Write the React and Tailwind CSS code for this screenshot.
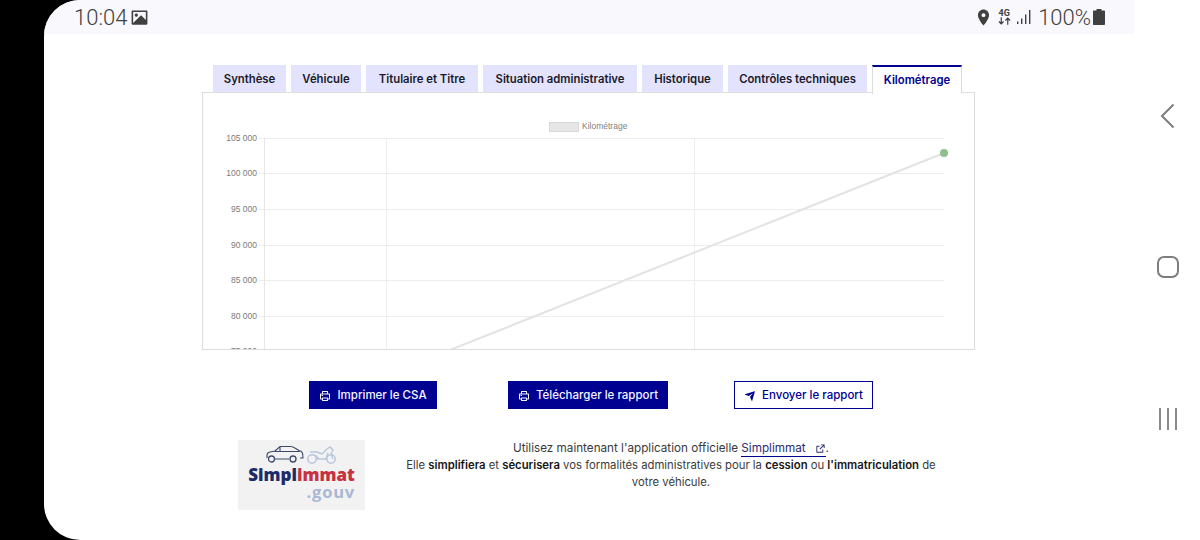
import { RiPrinterLine, RiSendPlaneFill, RiExternalLinkLine, RiImageFill } from "react-icons/ri";
import { MdLocationOn } from "react-icons/md";

const font = { fontFamily: "Inter, 'Noto Sans', sans-serif" };

let tabs = [
	{ title: "Synthèse", width: "w-[73px]" },
	{ title: "Véhicule", width: "w-[70px]" },
	{ title: "Titulaire et Titre", width: "w-[112px]" },
	{ title: "Situation administrative", width: "w-[154px]" },
	{ title: "Historique", width: "w-[81px]" },
	{ title: "Contrôles techniques", width: "w-[139px]" },
];

let Tabs = () => {
	return (
		<div className="flex gap-[5px] pl-[11px] h-[28px] text-[11.300px] font-semibold">
			{tabs.map((tab) => (
				<div key={tab.title} className={`${tab.width} h-[27px] pt-[1px] flex items-center justify-center bg-[#e3e3fd] text-[#1a1a2a] whitespace-nowrap`}>
					{tab.title}
				</div>
			))}
			<div className="relative z-10 w-[90px] h-[29px] flex items-center justify-center bg-white border-t-2 border-x border-x-[#dddddd] border-t-[#000091] text-[#000091] whitespace-nowrap">
				Kilométrage
			</div>
		</div>
	);
};

let Chart = () => {
	let rows = [
		["105 000", 138.5],
		["100 000", 173.5],
		["95 000", 209.5],
		["90 000", 245.5],
		["85 000", 280.5],
		["80 000", 316.5],
		["75 000", 351.5],
	];
	return (
		<svg viewBox="203 93 771 256" className="block w-[771px] h-[256px]">
			{rows.map(([label, y]) => (
				<g key={label}>
					<line x1="259" x2="944" y1={y} y2={y} stroke="#ededed" />
					<text x="257" y={y + 2.5} textAnchor="end" fontSize="8.500" fontFamily="Liberation Sans, sans-serif" fill="#7a7a7a">{label}</text>
				</g>
			))}
			<line x1="264.500" x2="264.500" y1="138" y2="349" stroke="#e6e6e6" />
			<line x1="386.500" x2="386.500" y1="138" y2="349" stroke="#ededed" />
			<line x1="694.500" x2="694.500" y1="138" y2="349" stroke="#ededed" />
			<line x1="440" y1="354" x2="944" y2="153" stroke="#e3e3e3" strokeWidth="2" />
			<circle cx="944" cy="153" r="4" fill="#8dbf8f" />
			<rect x="549.500" y="122.500" width="29" height="9" fill="#e6e6e6" stroke="#d8d8d8" />
			<text x="582" y="129" fontSize="8.500" fontFamily="Liberation Sans, sans-serif" fill="#808080">Kilométrage</text>
		</svg>
	);
};

let Logo = () => {
	return (
		<div className="w-[127px] h-[70px] bg-[#f2f2f3] flex flex-col items-center shrink-0 overflow-hidden">
			<svg viewBox="0 0 72 20" className="w-[72px] h-[20px] mt-[5px] ml-[1px]" fill="none">
				<path d="M1 13v-3c0-1.500 1-2.500 3-3l5-1 5-4.500h11c3 0 6 3 8 4 3 .5 4 2 4 7.500h-3M9 14h14M14 2v4M9 6.500h25" stroke="#3e4a6b" strokeWidth="1.100" />
				<circle cx="5.500" cy="14" r="3" stroke="#3e4a6b" strokeWidth="1.300" />
				<circle cx="27" cy="14" r="3" stroke="#3e4a6b" strokeWidth="1.300" />
				<circle cx="46" cy="14" r="4.200" stroke="#b9c6de" strokeWidth="1.500" />
				<circle cx="65" cy="14" r="4.200" stroke="#b9c6de" strokeWidth="1.500" />
				<path d="M44 7h7l5 2 5-5 3-2 3 3-2 4 2 5M50 14h10l2-6M49 10l4 4" stroke="#b9c6de" strokeWidth="1.400" />
			</svg>
			<div className="text-[17px] leading-[20px] font-extrabold" style={{ fontFamily: "'Open Sans', sans-serif" }}>
				<span className="text-[#1c2c66]">Simpl</span><span className="text-[#c8313e]">immat</span>
			</div>
			<div className="self-end pr-[10px] -mt-[1px] text-[16.500px] leading-[16px] font-bold text-[#a9b8d4] tracking-[0.8px]" style={{ fontFamily: "'Open Sans', sans-serif" }}>.gouv</div>
		</div>
	);
};

let StatusBar = () => {
	return (
		<div className="h-[34px] w-[1090px] shrink-0 bg-[#f8f8fd] flex items-center justify-between pl-[30px] pr-[29px] text-[#404040]" style={{ fontFamily: "Roboto, sans-serif" }}>
			<div className="flex items-center gap-[4px]">
				<span className="text-[22px] font-light">10:04</span>
				<RiImageFill className="w-[19px] h-[19px] -ml-[1px]" />
			</div>
			<div className="flex items-center">
				<MdLocationOn className="w-[19px] h-[19px]" />
				<div className="flex flex-col items-center w-[14px] ml-[4px] text-[9px] leading-[8px] font-bold">
					<span>4G</span>
					<svg viewBox="0 0 14 8" className="w-[13px] h-[8px]" fill="none" stroke="#404040" strokeWidth="1.300">
						<path d="M3.500 0v7M1 4.500 3.500 7 6 4.500M10.500 8V1M8 3.500 10.500 1 13 3.500" />
					</svg>
				</div>
				<svg viewBox="0 0 14 14" className="w-[14px] h-[14px] ml-[6px]" fill="#404040">
					<rect x="0" y="11.500" width="1.400" height="2.500" />
					<rect x="4" y="8.500" width="1.400" height="5.500" />
					<rect x="8" y="4.500" width="1.400" height="9.500" />
					<rect x="12" y="0" width="1.400" height="14" />
				</svg>
				<span className="text-[22px] font-light ml-[7px]">100%</span>
				<svg viewBox="0 0 12 16" className="w-[12px] h-[16px] ml-[2px]" fill="#404040">
					<path d="M3.500 0h5v1.500H11c.6 0 1 .4 1 1V15c0 .6-.4 1-1 1H1c-.6 0-1-.4-1-1V2.500c0-.6.4-1 1-1h2.500z" />
				</svg>
			</div>
		</div>
	);
};

let NavBar = () => {
	return (
		<div className="w-[66px] flex flex-col items-center pl-[1px] text-[#7d7d7d]">
			<svg viewBox="0 0 16 26" className="w-[16px] h-[26px] mt-[103px]" fill="none" stroke="currentColor" strokeWidth="2">
				<path d="M13.500 1.500 2 13l11.500 11.500" />
			</svg>
			<div className="w-[22px] h-[22px] mt-[127px] rounded-[7px] border-2 border-[#7d7d7d]"></div>
			<div className="flex gap-[6px] mt-[130px]">
				<div className="w-[2px] h-[22px] bg-[#8a8a8a]"></div>
				<div className="w-[2px] h-[22px] bg-[#8a8a8a]"></div>
				<div className="w-[2px] h-[22px] bg-[#8a8a8a]"></div>
			</div>
		</div>
	);
};

export default function App() {
	return (
		<div className="w-[1200px] h-[540px] overflow-hidden bg-black pl-[44px]" style={font}>
			<div className="h-full bg-white rounded-l-[36px] overflow-hidden flex">
				<div className="w-[1090px] shrink-0 flex flex-col">
					<StatusBar />
					<div className="pl-[158px] pt-[31px]">
						<Tabs />
						<div className="w-[773px] h-[258px] border border-[#dddddd] -mt-[1px]">
							<Chart />
						</div>
					</div>
					<div className="flex items-center mt-[31px] pl-[265px] text-[11.500px] font-medium">
						<div className="w-[128px] h-[28px] pt-[1px] flex items-center justify-center gap-[6px] bg-[#000091] text-[#f5f5fe]">
							<RiPrinterLine className="w-[12px] h-[12px]" />
							Imprimer le CSA
						</div>
						<div className="w-[160px] h-[28px] pt-[1px] ml-[71px] flex items-center justify-center gap-[6px] bg-[#000091] text-[#f5f5fe]">
							<RiPrinterLine className="w-[12px] h-[12px]" />
							Télécharger le rapport
						</div>
						<div className="w-[139px] h-[28px] pt-[1px] ml-[66px] flex items-center justify-center gap-[6px] border border-[#000091] text-[#000091]">
							<RiSendPlaneFill className="w-[12px] h-[12px]" />
							Envoyer le rapport
						</div>
					</div>
					<div className="flex mt-[31px] pl-[194px]">
						<Logo />
						<p className="w-[540px] ml-[36px] text-center text-[11.300px] leading-[16.700px] text-[#3a3a3a]">
							<span className="text-[11.700px]">
								Utilisez maintenant l'application officielle{" "}
								<span className="inline-flex items-center gap-[9px] border-b border-[#000091] text-[#2a2a70] leading-[15px]">Simplimmat <RiExternalLinkLine className="w-[11px] h-[11px]" /></span>.
							</span>
							<br />
							Elle <b className="font-semibold text-[#161616]">simplifiera</b> et <b className="font-semibold text-[#161616]">sécurisera</b> vos formalités administratives pour la <b className="font-semibold text-[#161616]">cession</b> ou <b className="font-semibold text-[#161616]">l'immatriculation</b> de votre véhicule.
						</p>
					</div>
				</div>
				<NavBar />
			</div>
		</div>
	);
}
